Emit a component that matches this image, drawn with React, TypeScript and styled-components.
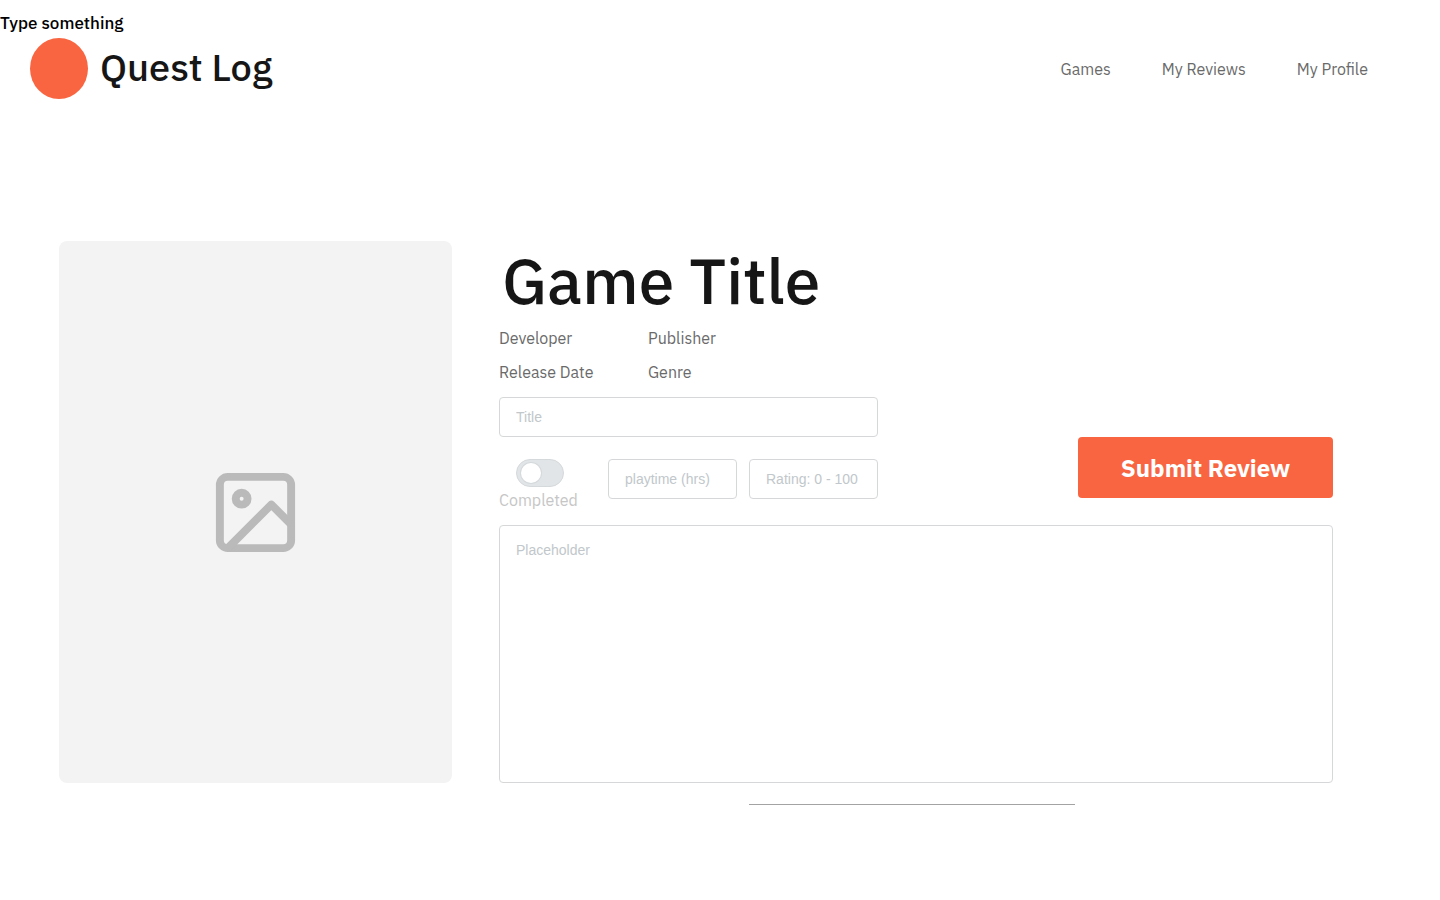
import React from "react";
import styled, { createGlobalStyle } from "styled-components";

const orange = "#f96540";
const ink = "#161616";

const GlobalStyle = createGlobalStyle`
  *, *::before, *::after { box-sizing: border-box; }
  body {
    margin: 0;
    background: #fff;
    color: ${ink};
    font-family: "IBM Plex Sans", Roboto, "Liberation Sans", sans-serif;
    font-size: 16px;
    line-height: 24px;
  }
`;

const Notice = styled.p`
  margin: 0;
  padding-top: 11px;
  font-size: 17px;
  font-weight: 500;
  line-height: 24px;
  color: #000;
`;

const Header = styled.header`
  display: flex;
  align-items: center;
  justify-content: space-between;
  padding: 3px 72px 0 30px;
`;

const Brand = styled.div`
  display: flex;
  align-items: center;
  gap: 12px;
`;

const Logo = styled.span`
  width: 58px;
  height: 61px;
  border-radius: 50%;
  background: ${orange};
`;

const BrandName = styled.span`
  padding-bottom: 4px;
  font-size: 38px;
  line-height: 48px;
  font-weight: 500;
`;

const Nav = styled.nav`
  display: flex;
  gap: 51px;
`;

const NavLink = styled.a`
  color: #6a6a6a;
  text-decoration: none;
`;

const Main = styled.main`
  display: grid;
  grid-template-columns: 393px minmax(0, 1fr);
  column-gap: 47px;
  padding: 142px 107px 95px 59px;
`;

const Cover = styled.div`
  display: flex;
  align-items: center;
  justify-content: center;
  height: 542px;
  border-radius: 8px;
  background: #f3f3f3;
`;

const Details = styled.section`
  display: flex;
  flex-direction: column;
`;

const GameTitle = styled.h1`
  margin: 0;
  padding-left: 3px;
  font-size: 64px;
  line-height: 78px;
  font-weight: 500;
`;

const Facts = styled.ul`
  display: grid;
  grid-template-columns: 149px 149px;
  row-gap: 10px;
  margin: 7px 0 13px;
  padding: 0;
  list-style: none;
  color: #6a6a6a;
`;

const Form = styled.form`
  display: flex;
  flex-direction: column;
`;

const FormTop = styled.div`
  display: flex;
  align-items: center;
  justify-content: space-between;
  margin-bottom: 13px;
`;

const Fields = styled.div`
  display: flex;
  flex-direction: column;
  gap: 22px;
  width: 379px;
`;

const FieldRow = styled.div`
  display: flex;
  align-items: flex-start;
  justify-content: space-between;
`;

const NumberFields = styled.div`
  display: flex;
  gap: 12px;
`;

const TextField = styled.input<{ $narrow?: boolean }>`
  width: ${({ $narrow }) => ($narrow ? "129px" : "100%")};
  height: 40px;
  padding: 0 16px;
  border: 1px solid #d5d7d9;
  border-radius: 4px;
  background: #fff;
  font: 14px/20px "Liberation Sans", Arial, sans-serif;
  color: ${ink};
  &::placeholder { color: #c1c7cb; opacity: 1; }
`;

const ReviewText = styled.textarea`
  display: block;
  width: 100%;
  height: 258px;
  padding: 14px 16px;
  border: 1px solid #d5d7d9;
  border-radius: 4px;
  resize: none;
  font: 14px/20px "Liberation Sans", Arial, sans-serif;
  color: ${ink};
  &::placeholder { color: #c1c7cb; opacity: 1; }
`;

const Toggle = styled.label`
  display: flex;
  flex-direction: column;
  gap: 1px;
  color: #c6c6c6;
`;

const Switch = styled.input`
  display: flex;
  align-items: center;
  appearance: none;
  width: 48px;
  height: 28px;
  margin: 0 0 0 17px;
  padding: 0 4px;
  border: 1px solid #d5d9dc;
  border-radius: 14px;
  background: #e1e5e8;
  &::before {
    content: "";
    width: 20px;
    height: 20px;
    border-radius: 50%;
    background: #fff;
    box-shadow: 0 0 0 1px #d5d9dc;
  }
  &:checked { background: ${orange}; justify-content: flex-end; }
`;

const Submit = styled.button`
  width: 255px;
  height: 61px;
  margin-top: 25px;
  padding: 2px 0 0;
  border: 0;
  border-radius: 4px;
  background: ${orange};
  color: #fff;
  font-family: inherit;
  font-size: 24px;
  font-weight: 700;
  line-height: 32px;
`;

const Divider = styled.hr`
  width: 326px;
  height: 1px;
  margin: 21px 0 0 250px;
  border: 0;
  background: #a3a3a3;
`;

function ImageIcon() {
  return (
    <svg width="95" height="95" viewBox="0 0 24 24" fill="none" stroke="#bababa" strokeWidth="2" strokeLinejoin="round" aria-hidden="true">
      <rect x="3" y="3" width="18" height="18" rx="2" />
      <circle cx="8.5" cy="8.5" r="1.5" />
      <path d="M21 15l-5-5L5 21" />
    </svg>
  );
}

export default function App() {
  return (
    <>
      <GlobalStyle />
      <Notice>Type something</Notice>
      <Header>
        <Brand>
          <Logo />
          <BrandName>Quest Log</BrandName>
        </Brand>
        <Nav>
          <NavLink href="#games">Games</NavLink>
          <NavLink href="#reviews">My Reviews</NavLink>
          <NavLink href="#profile">My Profile</NavLink>
        </Nav>
      </Header>
      <Main>
        <Cover>
          <ImageIcon />
        </Cover>
        <Details>
          <GameTitle>Game Title</GameTitle>
          <Facts>
            <li>Developer</li>
            <li>Publisher</li>
            <li>Release Date</li>
            <li>Genre</li>
          </Facts>
          <Form onSubmit={(event) => event.preventDefault()}>
            <FormTop>
              <Fields>
                <TextField aria-label="Title" placeholder="Title" />
                <FieldRow>
                  <Toggle>
                    <Switch type="checkbox" role="switch" />
                    Completed
                  </Toggle>
                  <NumberFields>
                    <TextField $narrow aria-label="Playtime in hours" placeholder="playtime (hrs)" />
                    <TextField $narrow aria-label="Rating" placeholder="Rating: 0 - 100" />
                  </NumberFields>
                </FieldRow>
              </Fields>
              <Submit type="submit">Submit Review</Submit>
            </FormTop>
            <ReviewText aria-label="Review" placeholder="Placeholder" />
          </Form>
          <Divider />
        </Details>
      </Main>
    </>
  );
}
